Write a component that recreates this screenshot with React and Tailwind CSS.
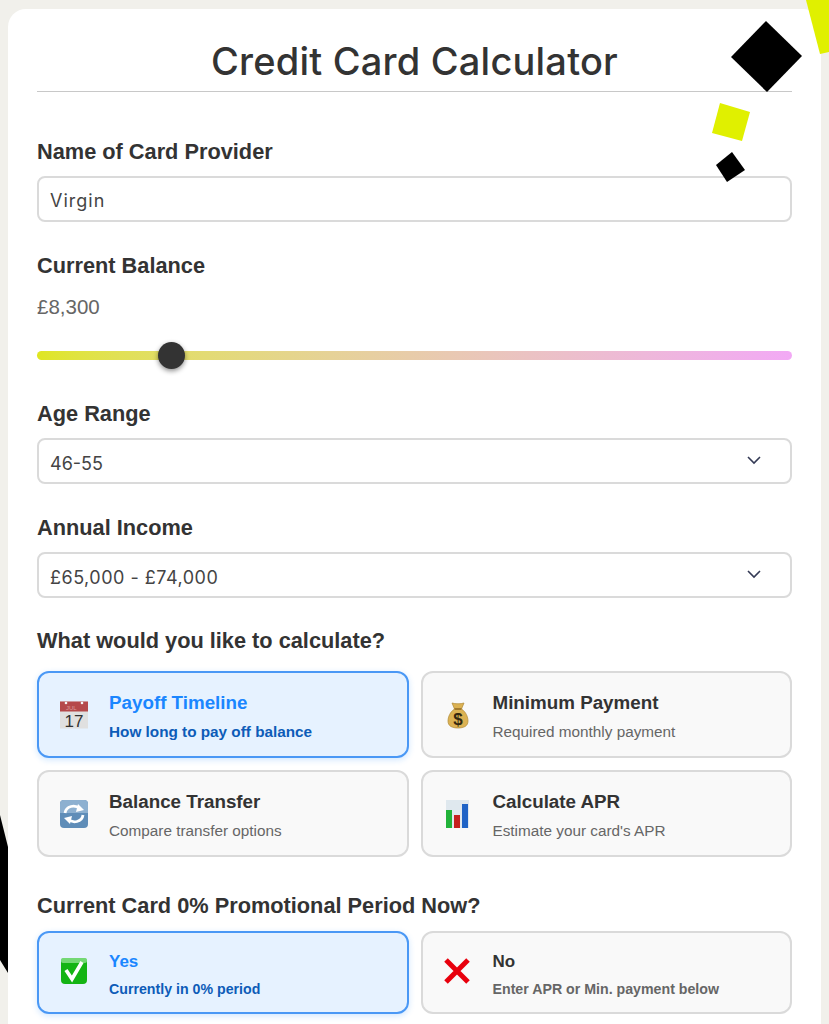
import React from 'react';

const labelCls = 'block text-[21.75px] leading-[26px] font-bold text-[#333]';
const fieldCls = 'mt-[11px] h-[46px] w-full rounded-lg border-2 border-[#dadada] bg-white pl-[11px] pr-[28px] flex items-center justify-between text-[18px] text-[#444]';
const monoFont = { fontFamily: '"Inter", sans-serif' };

function CalendarIcon() {
  return (
    <svg width="30" height="30" viewBox="0 0 30 30">
      <rect x="1" y="1.5" width="28" height="27" fill="#e0e0e0" />
      <rect x="1" y="1.5" width="28" height="10" fill="#b5494b" />
      <circle cx="7" cy="3" r="1.3" fill="#f4f4f4" />
      <circle cx="23" cy="3" r="1.3" fill="#f4f4f4" />
      <text x="7" y="9.5" fontSize="6" fill="#dc9a9a" fontFamily="Liberation Sans, sans-serif">JUL</text>
      <text x="15" y="27" textAnchor="middle" fontSize="17" fill="#333" fontFamily="Liberation Sans, sans-serif">17</text>
    </svg>
  );
}

function MoneyIcon() {
  return (
    <svg width="30" height="30" viewBox="0 0 30 30">
      <path d="M9 3 C12 4 18 4 21 3 L18.5 9 C23 12 25 17 25 21 C25 26 21 28 15 28 C9 28 5 26 5 21 C5 17 7 12 11.5 9 Z" fill="#dcb253" stroke="#b08a35" strokeWidth="0.7" />
      <path d="M11.5 9 L18.5 9" stroke="#8a6420" strokeWidth="1.4" />
      <text x="15" y="25" textAnchor="middle" fontSize="17" fontWeight="700" fill="#33270f" fontFamily="Liberation Sans, sans-serif">$</text>
    </svg>
  );
}

function TransferIcon() {
  return (
    <svg width="30" height="30" viewBox="0 0 30 30">
      <rect x="1" y="1" width="28" height="28" rx="4" fill="#5f8db8" />
      <path d="M1 5 a4 4 0 0 1 4 -4 h20 a4 4 0 0 1 4 4 v9 H1 Z" fill="#8db0d0" />
      <path d="M6 14 C7 7 16 5 21 10" fill="none" stroke="#fff" strokeWidth="2.8" />
      <path d="M19 5 L25 11 L17 13 Z" fill="#fff" />
      <path d="M24 16 C23 23 14 25 9 20" fill="none" stroke="#fff" strokeWidth="2.8" />
      <path d="M11 25 L5 19 L13 17 Z" fill="#fff" />
    </svg>
  );
}

function ChartIcon() {
  return (
    <svg width="30" height="30" viewBox="0 0 30 30">
      <rect x="3" y="1" width="23" height="28" fill="#dfe8ee" />
      <rect x="3" y="11" width="6" height="18" fill="#22b33a" />
      <rect x="11" y="16" width="6" height="13" fill="#c4201f" />
      <rect x="19" y="5" width="6" height="24" fill="#1f63c6" />
    </svg>
  );
}

function CheckIcon() {
  return (
    <svg width="30" height="30" viewBox="0 0 30 30" className="mb-[3px]">
      <rect x="2" y="2" width="26" height="26" rx="4" fill="#14b414" />
      <rect x="2" y="2" width="26" height="5" rx="2" fill="#74d874" />
      <path d="M7 14 L13 23 L23 6" fill="none" stroke="#fff" strokeWidth="3.6" />
    </svg>
  );
}

function CrossIcon() {
  return (
    <svg width="30" height="30" viewBox="0 0 30 30" className="mb-[3px]">
      <path d="M3 4 L25 26 M25 4 L3 26" stroke="#e8000d" strokeWidth="5" />
    </svg>
  );
}

function Chevron() {
  return (
    <svg width="16" height="16" viewBox="0 0 16 16" className="mb-[2px]" fill="none" stroke="#343a55" strokeWidth="1.6">
      <path d="M2 5 L8 11 L14 5" />
    </svg>
  );
}

function OptionCard({ icon, title, text, active, small, className }) {
  return (
    <div
      className={`flex items-center rounded-xl border-2 pl-5 ${className} ${
        active ? 'border-[#4a98f5] bg-[#e6f2ff] shadow-[0_2px_6px_rgba(26,134,255,0.2)]' : 'border-[#dadada] bg-[#f9f9f9]'
      }`}
    >
      <div className="w-[50px] shrink-0">{icon}</div>
      <div className={small ? 'pt-[3px]' : 'pt-1'}>
        <div className={`${small ? 'text-[17px]' : 'text-[18.8px]'} leading-6 font-bold ${active ? 'text-[#1a86ff]' : 'text-[#333]'}`}>{title}</div>
        <div
          className={`${small ? 'mt-[5px] text-[14.2px]' : 'mt-[7px] text-[15.3px]'} leading-5 ${
            active ? 'font-bold text-[#0d5cb8]' : small ? 'font-bold text-[#666]' : 'text-[#666]'
          }`}
        >
          {text}
        </div>
      </div>
    </div>
  );
}

export default function App() {
  return (
    <div className="relative h-screen overflow-hidden bg-[#f1f0eb] pl-2 pr-2 pt-[9px]" style={{ fontFamily: '"Liberation Sans", Arial, sans-serif' }}>
      <svg className="absolute left-0 top-[800px]" width="20" height="190" viewBox="0 0 20 190">
        <polygon points="-60,90 0,15 8,47 8,173 0,160" fill="#000" />
      </svg>

      <div className="relative min-h-[1100px] rounded-t-[18px] bg-white px-[29px] pt-[30px]">
        <div className="border-b border-[#c8c8c8] pb-2">
          <h1 className="text-center text-[38px] leading-[44px] font-medium tracking-[0.2px] text-[#333]" style={monoFont}>Credit Card Calculator</h1>
        </div>

        <label className={`${labelCls} mt-[47px]`}>Name of Card Provider</label>
        <div className={fieldCls} style={monoFont}>
          <span className="pt-[2px] tracking-[1px]">Virgin</span>
        </div>

        <label className={`${labelCls} mt-[31px]`}>Current Balance</label>
        <div className="mt-4 text-[20.5px] leading-6 text-[#666]">£8,300</div>
        <div className="relative mt-8 h-[9px] rounded-full bg-linear-to-r from-[#dfe620] to-[#f2a9f5]">
          <div className="absolute left-[121px] top-[-9px] h-[27px] w-[27px] rounded-full bg-[#333] shadow-[0_2px_5px_rgba(0,0,0,0.45)]" />
        </div>

        <label className={`${labelCls} mt-[41px]`}>Age Range</label>
        <div className={fieldCls} style={monoFont}>
          <span className="pt-[5px]">46-55</span>
          <Chevron />
        </div>

        <label className={`${labelCls} mt-[31px]`}>Annual Income</label>
        <div className={fieldCls} style={monoFont}>
          <span className="pt-[5px] tracking-[0.5px]">£65,000 - £74,000</span>
          <Chevron />
        </div>

        <label className={`${labelCls} mt-[30px]`}>What would you like to calculate?</label>
        <div className="mt-[17px] grid grid-cols-2 gap-x-3 gap-y-3">
          <OptionCard className="h-[87px]" active icon={<CalendarIcon />} title="Payoff Timeline" text="How long to pay off balance" />
          <OptionCard className="h-[87px]" icon={<MoneyIcon />} title="Minimum Payment" text="Required monthly payment" />
          <OptionCard className="h-[87px]" icon={<TransferIcon />} title="Balance Transfer" text="Compare transfer options" />
          <OptionCard className="h-[87px]" icon={<ChartIcon />} title="Calculate APR" text="Estimate your card's APR" />
        </div>

        <label className={`${labelCls} mt-9`}>Current Card 0% Promotional Period Now?</label>
        <div className="mt-3 grid grid-cols-2 gap-x-3">
          <OptionCard className="h-[83px]" small active icon={<CheckIcon />} title="Yes" text="Currently in 0% period" />
          <OptionCard className="h-[83px]" small icon={<CrossIcon />} title="No" text="Enter APR or Min. payment below" />
        </div>
      </div>

      <svg className="absolute left-0 top-0" width="829" height="190" viewBox="0 0 829 190">
        <polygon points="806,0 829,0 829,52 820,54" fill="#e0f000" />
        <polygon points="766,21 802,56 767,92 731,57" fill="#000" />
        <polygon points="720,103 750,112 742,141 712,133" fill="#e0f000" />
        <polygon points="732,152 745,170 727,182 716,165" fill="#000" />
      </svg>
    </div>
  );
}
